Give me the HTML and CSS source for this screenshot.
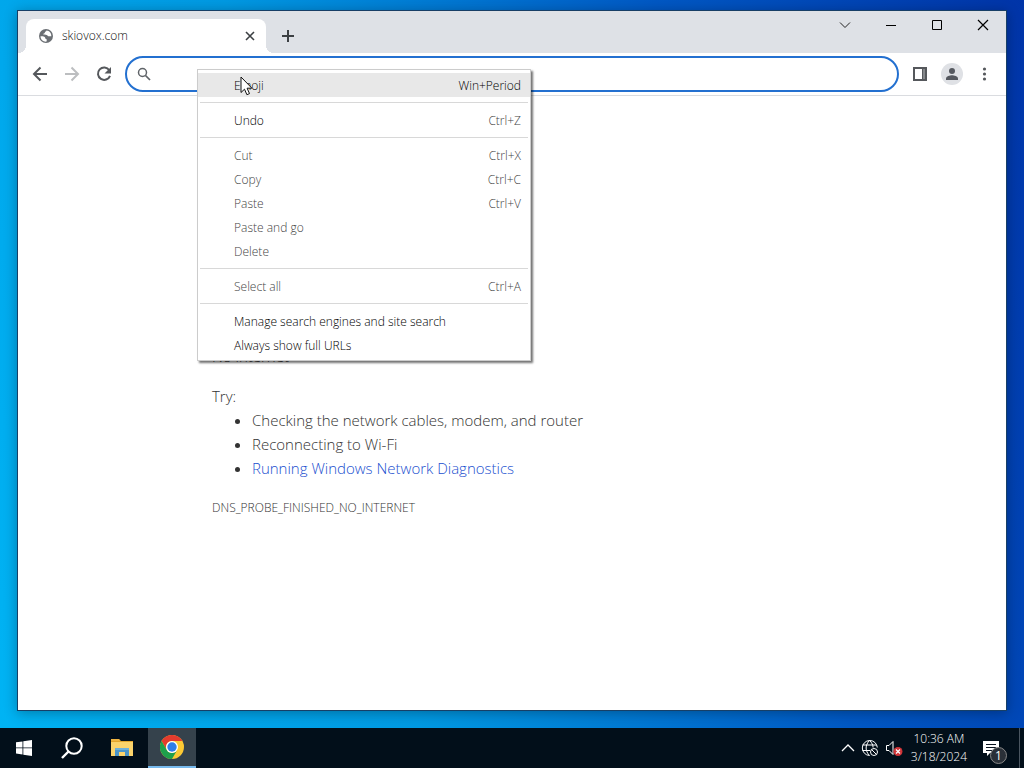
FILE: index.html
```html
<!DOCTYPE html>
<html lang="en">
<head>
    <meta charset="UTF-8">
    <meta name="viewport" content="width=device-width, initial-scale=1.0">
    <title>skiovox.com</title>
    <link rel="stylesheet" href="styles.css">
</head>
<body>
    <div class="desktop">
        <div class="window">
            <div class="titlebar">
                <div class="tab">
                    <svg class="favicon" width="16" height="16" viewBox="0 0 16 16">
                        <circle cx="8" cy="8" r="7" fill="#6b6f74"/>
                        <path d="M2.5 8.2c1.5.1 3.200-.3 4.200.8 1 1 .2 1.700 1.300 2 1 .3.800 1 .6 2.600C5.500 14 2.600 11.800 2.500 8.200z" fill="#fff"/>
                        <path d="M8.500 2.500c-.2 1.200-1.600 1-1.700 2.200-.1 1-1.600.6-1.500 1.700 1.700.3 3.300-.2 4.200 1 .7 1 1.900.9 3.800.8C13.500 5 11.300 2.800 8.500 2.500z" fill="#fff"/>
                    </svg>
                    <span class="tab-title">skiovox.com</span>
                    <button class="tab-close" aria-label="Close tab">
                        <svg width="10" height="10" viewBox="0 0 10 10"><path d="M1 1l8 8M9 1L1 9" stroke="#3c4043" stroke-width="1.600" fill="none"/></svg>
                    </button>
                </div>
                <button class="new-tab" aria-label="New tab">
                    <svg width="12" height="12" viewBox="0 0 12 12"><path d="M6 0v12M0 6h12" stroke="#3c4043" stroke-width="2"/></svg>
                </button>
                <div class="window-buttons">
                    <button aria-label="Search tabs"><svg width="12" height="12" viewBox="0 0 12 12"><path d="M1 3.500l5 5 5-5" stroke="#222" fill="none"/></svg></button>
                    <button aria-label="Minimize"><svg width="12" height="12" viewBox="0 0 12 12"><path d="M1 6.500h10" stroke="#000"/></svg></button>
                    <button aria-label="Maximize"><svg width="12" height="12" viewBox="0 0 12 12"><path d="M1.500 1.500h9v9h-9z" stroke="#000" fill="none"/></svg></button>
                    <button aria-label="Close"><svg width="12" height="12" viewBox="0 0 12 12"><path d="M1 1l10 10M11 1L1 11" stroke="#000" stroke-width="1.200" fill="none"/></svg></button>
                </div>
            </div>

            <div class="toolbar">
                <button class="tool-button" aria-label="Back">
                    <svg width="16" height="16" viewBox="0 0 16 16"><path d="M15 8H2.500M8.500 1.500L2 8l6.500 6.500" stroke="#55585c" stroke-width="2" fill="none"/></svg>
                </button>
                <button class="tool-button" aria-label="Forward">
                    <svg width="16" height="16" viewBox="0 0 16 16"><path d="M1 8h12.500M7.500 1.500L14 8l-6.500 6.500" stroke="#bcbec0" stroke-width="2" fill="none"/></svg>
                </button>
                <button class="tool-button" aria-label="Reload">
                    <svg width="16" height="16" viewBox="0 0 16 16"><path d="M13.300 4.200A6.200 6.200 0 1 0 14 9.800" stroke="#55585c" stroke-width="2" fill="none"/><path d="M15 1v6.500H8.500z" fill="#55585c"/></svg>
                </button>
                <label class="omnibox">
                    <svg width="14" height="14" viewBox="0 0 14 14"><circle cx="5.500" cy="5.500" r="4" stroke="#5f6368" stroke-width="1.500" fill="none"/><path d="M8.500 8.500l4.500 4.500" stroke="#5f6368" stroke-width="1.700"/></svg>
                    <input type="text" class="url" aria-label="Address and search bar">
                </label>
                <button class="tool-button" aria-label="Side panel">
                    <svg width="16" height="16" viewBox="0 0 16 16"><path d="M1 1h14v14H1zM3 3v10h7V3z" fill="#55585c" fill-rule="evenodd"/><path d="M11 3h2v10h-2z" fill="#85888b"/></svg>
                </button>
                <button class="tool-button" aria-label="Profile">
                    <svg width="22" height="22" viewBox="0 0 22 22"><circle cx="11" cy="11" r="11" fill="#dfe1e5"/><circle cx="11" cy="8" r="3" fill="#55585f"/><path d="M5 17v-1.500c0-2 4-3.200 6-3.200s6 1.200 6 3.200V17z" fill="#55585f"/></svg>
                </button>
                <button class="tool-button" aria-label="Menu">
                    <svg width="16" height="16" viewBox="0 0 16 16"><g fill="#55585c"><circle cx="8.500" cy="3" r="1.600"/><circle cx="8.500" cy="8" r="1.600"/><circle cx="8.500" cy="13" r="1.600"/></g></svg>
                </button>
            </div>

            <main class="page">
                <div class="error">
                    <p>No internet</p>
                    <div class="suggestions">
                        <p>Try:</p>
                        <ul>
                            <li>Checking the network cables, modem, and router</li>
                            <li>Reconnecting to Wi-Fi</li>
                            <li><a href="#">Running Windows Network Diagnostics</a></li>
                        </ul>
                    </div>
                    <p class="error-code">DNS_PROBE_FINISHED_NO_INTERNET</p>
                </div>
            </main>

            <div class="menu">
                <button class="item active"><span>Emoji</span><span>Win+Period</span></button>
                <hr>
                <button class="item"><span>Undo</span><span class="key">Ctrl+Z</span></button>
                <hr>
                <button class="item" disabled><span>Cut</span><span>Ctrl+X</span></button>
                <button class="item" disabled><span>Copy</span><span>Ctrl+C</span></button>
                <button class="item" disabled><span>Paste</span><span>Ctrl+V</span></button>
                <button class="item" disabled><span>Paste and go</span></button>
                <button class="item" disabled><span>Delete</span></button>
                <hr>
                <button class="item" disabled><span>Select all</span><span>Ctrl+A</span></button>
                <hr>
                <button class="item"><span>Manage search engines and site search</span></button>
                <button class="item"><span>Always show full URLs</span></button>
                <svg class="cursor" width="13" height="20" viewBox="0 0 13 20"><path d="M1 1v15.500l3.500-3.300 2.400 5.500 2.600-1.100-2.400-5.400h4.800z" fill="#fff" stroke="#111"/></svg>
            </div>
        </div>

        <div class="taskbar">
            <button class="task" aria-label="Start">
                <svg width="16" height="16" viewBox="0 0 16 16" fill="#fff"><path d="M0 2.300l6.500-.9v6.100H0zM7.300 1.300L16 0v7.500H7.300zM0 8.300h6.500v6.200L0 13.600zM7.300 8.300H16V16l-8.700-1.300z"/></svg>
            </button>
            <button class="task" aria-label="Search">
                <svg width="24" height="24" viewBox="0 0 24 24"><circle cx="14" cy="10" r="7.700" stroke="#fff" stroke-width="2" fill="none"/><path d="M8.500 15.500L2 22" stroke="#fff" stroke-width="2.400"/></svg>
            </button>
            <div class="pinned">
                <button class="task" aria-label="File Explorer">
                    <svg width="22" height="20" viewBox="0 0 22 20">
                        <path d="M0 1h8l2 2h12v5H0z" fill="#e3a62c"/>
                        <path d="M0 4h22v14H0z" fill="#fbd36b"/>
                        <path d="M0 1h8l1 2H0z" fill="#f0b541"/>
                        <path d="M4 18v-8h14v8h-4v-4H8v4z" fill="#4a94c8"/>
                        <path d="M4 10h14v2H4z" fill="#6fb0d8"/>
                    </svg>
                </button>
                <button class="task running" aria-label="Google Chrome">
                    <svg width="24" height="24" viewBox="0 0 24 24">
                        <circle cx="12" cy="12" r="12" fill="#fcc934"/>
                        <path d="M1.600 6A12 12 0 0 1 22.400 6H12a6 6 0 0 0-5.200 9z" fill="#e33b2e"/>
                        <path d="M1.600 6A12 12 0 0 0 12 24l5.200-9A6 6 0 0 1 6.800 15z" fill="#1ea04c"/>
                        <circle cx="12" cy="12" r="6" fill="#fff"/>
                        <circle cx="12" cy="12" r="4.700" fill="#2f7de9"/>
                    </svg>
                </button>
            </div>
            <div class="tray">
                <div class="tray-icons">
                    <svg width="14" height="16" viewBox="0 0 14 16"><path d="M1 11l6-6 6 6" stroke="#fff" stroke-width="1.300" fill="none"/></svg>
                    <svg width="18" height="18" viewBox="0 0 18 18" fill="none" stroke="#fff"><path d="M8.500 16.500A7.500 7.500 0 1 1 16.300 8.500M8.500 16.500C4 12 4 6 8.500 1.500M8.500 1.500c2.500 2.300 3.500 4.500 3.600 7M1.500 6h14M1.500 11.500H9"/><circle cx="13" cy="13" r="3.500" fill="#020d18"/><path d="M10.500 10.500l5 5"/></svg>
                    <svg width="18" height="18" viewBox="0 0 18 18"><path d="M1.500 6.500H4l4-4v13l-4-4H1.500z" stroke="#fff" fill="none"/><circle cx="13" cy="12.500" r="4.500" fill="#d13438"/><path d="M11 10.500l4 4M15 10.500l-4 4" stroke="#fff" stroke-width="1.200"/></svg>
                </div>
                <div class="clock">
                    <span>10:36 AM</span>
                    <span>3/18/2024</span>
                </div>
                <button class="notifications" aria-label="Notifications">
                    <svg width="18" height="16" viewBox="0 0 18 16"><path d="M1 1h16v12H8l-3 3v-3H1z" fill="#fff"/><path d="M4 4.500h10M4 7.500h10M4 10.500h6" stroke="#0a1420"/></svg>
                    <span class="badge">1</span>
                </button>
                <button class="show-desktop" aria-label="Show desktop"></button>
            </div>
        </div>
    </div>
</body>
</html>
```

FILE: styles.css
```css
* {
    box-sizing: border-box;
}
body {
    margin: 0;
    font-family: "Open Sans", "Noto Sans", sans-serif;
    font-size: 12px;
    color: #111;
}
button {
    display: flex;
    align-items: center;
    justify-content: center;
    flex-shrink: 0;
    padding: 0;
    border: none;
    background: none;
    font: inherit;
    color: inherit;
}
p, ul {
    margin: 0;
}
.desktop {
    display: flex;
    flex-direction: column;
    min-height: 100vh;
    background: linear-gradient(75deg, #00b4f4, #0099e2 35%, #0058c4 70%, #0034a8);
}
.window {
    position: relative;
    display: flex;
    flex-direction: column;
    flex: 1;
    margin: 10px 17px 17px;
    border: 1px solid #173f66;
    background: #fff;
    box-shadow: 0 2px 12px rgba(0, 0, 0, 0.3);
}

/* tab strip */
.titlebar {
    display: flex;
    height: 42px;
    padding-left: 8px;
    background: #dee1e6;
}
.tab {
    position: relative;
    display: flex;
    align-items: center;
    width: 240px;
    margin-top: 8px;
    padding: 0 10px 0 12px;
    border-radius: 8px 8px 0 0;
    background: #fff;
}
.tab::before, .tab::after {
    content: "";
    position: absolute;
    bottom: 0;
    width: 8px;
    height: 8px;
}
.tab::before {
    left: -8px;
    background: radial-gradient(circle at 0 0, #dee1e6 8px, #fff 8px);
}
.tab::after {
    right: -8px;
    background: radial-gradient(circle at 100% 0, #dee1e6 8px, #fff 8px);
}
.tab-title {
    flex: 1;
    margin-left: 8px;
    font-weight: 300;
    line-height: 16px;
}
.tab-close {
    width: 12px;
    height: 16px;
}
.new-tab {
    width: 28px;
    height: 28px;
    margin: 11px 0 0 8px;
}
.window-buttons {
    display: flex;
    margin-left: auto;
}
.window-buttons button {
    width: 46px;
    height: 28px;
}

/* toolbar */
.toolbar {
    display: flex;
    align-items: center;
    height: 43px;
    padding: 0 6px;
    border-bottom: 1px solid #dadce0;
}
.tool-button {
    width: 32px;
    height: 32px;
}
.omnibox {
    display: flex;
    align-items: center;
    flex: 1;
    height: 36px;
    margin: 0 5px;
    padding: 0 10px;
    border: 2px solid #2370d0;
    border-radius: 18px;
}
.url {
    flex: 1;
    min-width: 0;
    margin-left: 8px;
    border: none;
    outline: none;
    background: none;
    font: inherit;
}

/* error page */
.page {
    flex: 1;
    padding-top: 248px;
    font-size: 15px;
    font-weight: 300;
    line-height: 24px;
    color: #333;
}
.error {
    max-width: 600px;
    margin: 0 auto;
}
.suggestions {
    margin: 16px 0;
}
.suggestions ul {
    padding-left: 40px;
}
.suggestions a {
    color: #1a4fcf;
    text-decoration: none;
}
.error-code {
    font-size: 12px;
}

/* context menu */
.menu {
    position: absolute;
    top: 58px;
    left: 179px;
    width: 334px;
    padding: 3px 0;
    border: 1px solid #ccc;
    background: #fff;
    box-shadow: 2px 2px 2px rgba(0, 0, 0, 0.55);
    font-weight: 300;
    color: #000;
}
.item {
    justify-content: space-between;
    width: 100%;
    height: 24px;
    padding: 0 9px 0 36px;
}
.item.active {
    background: #e8e8e8;
}
.item:disabled, .key {
    color: #444;
}
.menu hr {
    height: 1px;
    margin: 5px 2px;
    border: none;
    background: #d8d8d8;
}
.cursor {
    position: absolute;
    top: 6px;
    left: 42px;
}

/* taskbar */
.taskbar {
    display: flex;
    height: 40px;
    background: #020f1a;
    color: #fff;
}
.task {
    width: 48px;
    height: 40px;
}
.pinned {
    display: flex;
    gap: 2px;
    margin-left: 2px;
}
.running {
    border-bottom: 2px solid #76b9ed;
    background: #35424c;
}
.tray {
    display: flex;
    align-items: center;
    margin-left: auto;
}
.tray-icons {
    display: flex;
    align-items: center;
    gap: 6px;
    margin-right: 8px;
}
.clock {
    display: flex;
    flex-direction: column;
    align-items: center;
    font-weight: 300;
    line-height: 18px;
}
.notifications {
    position: relative;
    width: 48px;
    height: 40px;
}
.badge {
    position: absolute;
    right: 8px;
    bottom: 4px;
    width: 17px;
    height: 17px;
    border: 1px solid #888;
    border-radius: 50%;
    background: #2a3038;
    line-height: 15px;
}
.show-desktop {
    width: 5px;
    height: 40px;
    margin-left: 4px;
    border-left: 1px solid #4a5560;
}
```
